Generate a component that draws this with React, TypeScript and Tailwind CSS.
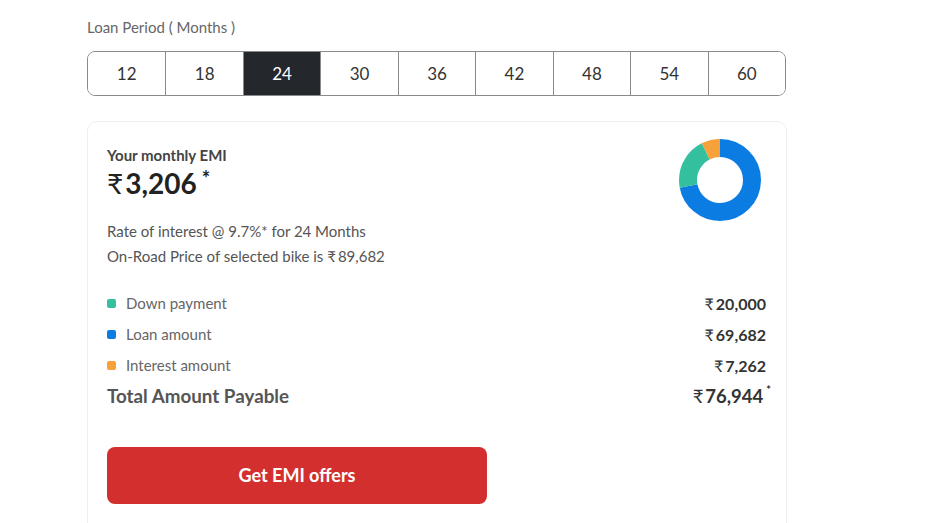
import React from "react";

const periods = [12, 18, 24, 30, 36, 42, 48, 54, 60];

const breakdown = [
  { label: "Down payment", value: 20000, color: "#34bf9f" },
  { label: "Loan amount", value: 69682, color: "#0b7de2" },
  { label: "Interest amount", value: 7262, color: "#f6a13a" },
];

function Donut() {
  const r = 32;
  const c = 2 * Math.PI * r;
  // clockwise from 12 o'clock: loan, down payment, interest
  const order = [breakdown[1], breakdown[0], breakdown[2]];
  const total = order.reduce((s, d) => s + d.value, 0);
  let offset = 0;
  return (
    <svg width="84" height="84" viewBox="0 0 84 84" className="shrink-0">
      <g transform="rotate(-90 42 42)">
        {order.map((d) => {
          const len = (d.value / total) * c;
          const el = (
            <circle
              key={d.label}
              cx="42"
              cy="42"
              r={r}
              fill="none"
              stroke={d.color}
              strokeWidth="18"
              strokeDasharray={`${len} ${c - len}`}
              strokeDashoffset={-offset}
            />
          );
          offset += len;
          return el;
        })}
      </g>
    </svg>
  );
}

function Rupee({ children, className = "" }: { children: React.ReactNode; className?: string }) {
  return (
    <span className={className}>
      <span className="mr-[2px] font-normal">₹</span>
      {children}
    </span>
  );
}

export default function App() {
  return (
    <div className="min-h-[523px] bg-white font-['Lato','Noto_Sans',sans-serif]">
      <div className="w-[787px] pl-[87px] pt-[17px]">
        <p className="text-[15px] leading-[20px] text-[#666]">Loan Period ( Months )</p>

        <div className="mr-[1px] mt-[14px] grid h-[45px] grid-cols-9 overflow-hidden rounded-[8px] border border-[#8a8a8a]">
          {periods.map((p, i) => (
            <button
              key={p}
              className={
                (i > 0 ? "border-l border-[#8a8a8a] " : "") +
                (p === 24 ? "bg-[#24272c] text-white" : "bg-white text-[#333]") +
                " text-[17px]"
              }
            >
              {p}
            </button>
          ))}
        </div>

        <div className="mt-[25px] h-[420px] rounded-[10px] border border-[#eeeeee] px-[19px] pt-[16px]">
          <div className="flex items-start justify-between">
            <div className="pt-[7px]">
              <p className="text-[15px] font-bold leading-[20px] text-[#444]">Your monthly EMI</p>
              <p className="mt-[1px] flex items-start text-[28px] font-bold leading-[34px] text-[#222]">
                <Rupee>3,206</Rupee>
                <span className="ml-[5px] text-[20px] leading-[24px]">*</span>
              </p>
              <div className="mt-[19px] text-[15px] leading-[25px] text-[#555]">
                <p>Rate of interest @ 9.7%* for 24 Months</p>
                <p>
                  On-Road Price of selected bike is <Rupee>89,682</Rupee>
                </p>
              </div>
            </div>
            <div className="pr-[5px]">
              <Donut />
            </div>
          </div>

          <div className="mt-[19px]">
            {breakdown.map((d) => (
              <div key={d.label} className="flex h-[31px] items-center justify-between">
                <div className="flex items-center gap-[10px]">
                  <span className="h-[9px] w-[9px] rounded-[2px]" style={{ backgroundColor: d.color }} />
                  <span className="text-[15px] text-[#666]">{d.label}</span>
                </div>
                <Rupee className="mr-[1px] text-[16px] font-bold text-[#333]">{d.value.toLocaleString("en-IN")}</Rupee>
              </div>
            ))}
            <div className="flex h-[31px] items-center justify-between">
              <span className="text-[18.8px] font-bold text-[#555]">Total Amount Payable</span>
              <span className="-mr-[4px] flex items-start text-[18.5px] font-bold text-[#333]">
                <Rupee>76,944</Rupee>
                <span className="ml-[3px] text-[11px] leading-[14px]">*</span>
              </span>
            </div>
          </div>

          <button className="mt-[35px] h-[57px] w-[380px] rounded-[8px] bg-[#d32f2f] text-[18px] font-bold text-white">
            Get EMI offers
          </button>
        </div>
      </div>
    </div>
  );
}
